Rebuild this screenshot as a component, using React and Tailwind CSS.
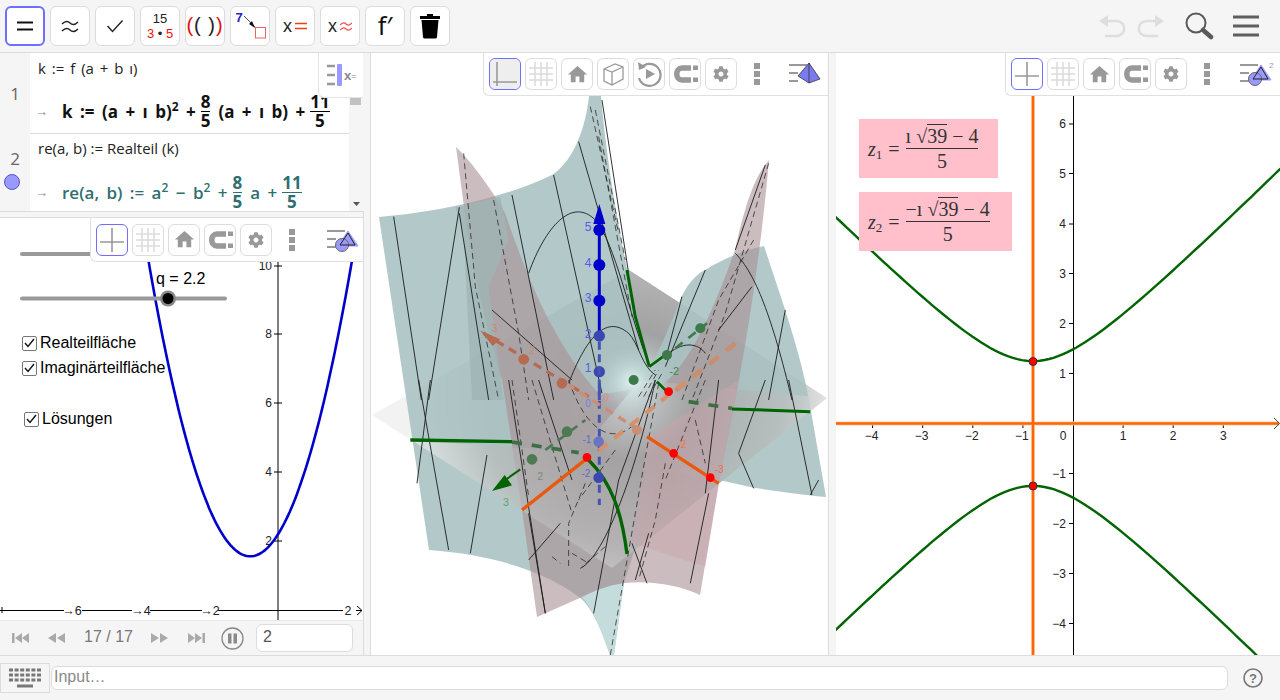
import { MdHome } from 'react-icons/md';
import { FaCog } from 'react-icons/fa';

const gray = '#999999';

function ToolBtn({ active, children }) {
  return (
    <button
      className={
        active
          ? 'w-10 h-10 shrink-0 flex items-center justify-center rounded-md bg-white border-2 border-[#6e6eff]'
          : 'w-10 h-10 shrink-0 flex items-center justify-center rounded-md bg-white border border-[#dcdcdc]'
      }
    >
      {children}
    </button>
  );
}

function Toolbar() {
  return (
    <div className="h-[53px] shrink-0 flex items-center gap-[5px] px-[5px] bg-[#f5f5f5] border-b border-[#dcdcdc]">
      <ToolBtn active>
        <svg width="18" height="12" viewBox="0 0 18 12">
          <path d="M1 2.5H17M1 9.5H17" stroke="#111" strokeWidth="1.8" />
        </svg>
      </ToolBtn>
      <ToolBtn>
        <svg width="18" height="13" viewBox="0 0 18 13" fill="none">
          <path d="M1 4C4 1 7 1 9 3S14 5 17 2M1 11C4 8 7 8 9 10S14 12 17 9" stroke="#222" strokeWidth="1.5" />
        </svg>
      </ToolBtn>
      <ToolBtn>
        <svg width="18" height="14" viewBox="0 0 18 14" fill="none">
          <path d="M1.5 7L6.5 12.5L16.5 1.5" stroke="#222" strokeWidth="1.4" />
        </svg>
      </ToolBtn>
      <ToolBtn>
        <div className="flex flex-col items-center text-[13px] leading-[15px]">
          <span className="text-[#222]">15</span>
          <span className="text-[#f01010]">3 <span className="text-[#222]">•</span> 5</span>
        </div>
      </ToolBtn>
      <ToolBtn>
        <span className="text-[20px] text-[#222] tracking-[1px] leading-none -mt-[2px]">
          <span className="text-[#e01010]">(</span>( )<span className="text-[#e01010]">)</span>
        </span>
      </ToolBtn>
      <ToolBtn>
        <svg width="32" height="32" viewBox="0 0 32 32" fill="none">
          <text x="1.5" y="12" fontSize="13" fontWeight="bold" fill="#2222cc" fontFamily="Liberation Sans">7</text>
          <path d="M10 6L21 17" stroke="#222" strokeWidth="0.8" />
          <path d="M15 14L21 18L18 11Z" fill="#111" />
          <rect x="21.5" y="17.5" width="10" height="10.5" stroke="#f06060" strokeWidth="1" />
        </svg>
      </ToolBtn>
      <ToolBtn>
        <div className="flex items-center gap-[3px]">
          <span className="text-[18px] text-[#222]">x</span>
          <svg width="12" height="8" viewBox="0 0 12 8"><path d="M0 1.5H12M0 6.5H12" stroke="#f04010" strokeWidth="1.5" /></svg>
        </div>
      </ToolBtn>
      <ToolBtn>
        <div className="flex items-center gap-[3px]">
          <span className="text-[18px] text-[#222]">x</span>
          <svg width="12" height="9" viewBox="0 0 12 9" fill="none"><path d="M0 3C3 0 5 1 6 2S9 4 12 1M0 8C3 5 5 6 6 7S9 9 12 6" stroke="#f05050" strokeWidth="1.2" /></svg>
        </div>
      </ToolBtn>
      <ToolBtn>
        <span className="text-[25px] text-[#111] font-['Noto_Sans',sans-serif] leading-none -mt-[2px]">f′</span>
      </ToolBtn>
      <ToolBtn>
        <svg width="20" height="26" viewBox="0 0 20 26">
          <path d="M7 1H13V3H20V6H0V3H7Z" fill="#000" />
          <path d="M1.5 7H18.5L17 24Q17 25.5 15 25.5H5Q3 25.5 3 24Z" fill="#000" />
        </svg>
      </ToolBtn>
      <div className="ml-auto flex items-center gap-[11px] pr-[15px]">
        <svg width="28" height="24" viewBox="0 0 28 24" fill="none" stroke="#dedede" strokeWidth="2.5">
          <path d="M3 7H18C29 7 29 22 18 22H7" />
          <path d="M1 7L10 1V13Z" fill="#dedede" stroke="none" />
        </svg>
        <svg width="28" height="24" viewBox="0 0 28 24" fill="none" stroke="#dedede" strokeWidth="2.5">
          <path d="M25 7H10C-1 7 -1 22 10 22H21" />
          <path d="M27 7L18 1V13Z" fill="#dedede" stroke="none" />
        </svg>
        <svg className="ml-[8px]" width="30" height="30" viewBox="0 0 30 30" fill="none">
          <circle cx="12" cy="12" r="9.5" stroke="#5a5a5a" strokeWidth="2" />
          <path d="M19 19L27 26" stroke="#5a5a5a" strokeWidth="4.5" strokeLinecap="round" />
        </svg>
        <svg className="ml-[7px]" width="28" height="24" viewBox="0 0 28 24">
          <path d="M1 3H27M1 12H27M1 21H27" stroke="#5f5f5f" strokeWidth="3" />
        </svg>
      </div>
    </div>
  );
}

function Frac({ top, bottom, color = 'border-black' }) {
  return (
    <span className="inline-flex flex-col items-center mx-[5px] font-bold text-[17px] leading-[18px]">
      <span>{top}</span>
      <span className={'w-full text-center border-t ' + color}>{bottom}</span>
    </span>
  );
}

function Sup({ children }) {
  return <span className="inline-block text-[12px] leading-none -translate-y-[7px]">{children}</span>;
}

function AlgebraView() {
  return (
    <div className="h-[159px] shrink-0 flex relative bg-white border-b border-[#dcdcdc] font-['Open_Sans',sans-serif]">
      <div className="w-[30px] shrink-0 bg-[#f5f5f5] flex flex-col text-[#666] text-[17px]">
        <div className="h-[81px] flex items-center justify-center pt-[1px]">1</div>
        <div className="flex-1 flex flex-col items-center pt-[14px] gap-[4px]">
          <span className="leading-[22px]">2</span>
          <span className="w-4 h-4 -ml-[6px] rounded-full bg-[#9999ff] border border-[#5555cc]" />
        </div>
      </div>
      <div className="w-[319px] shrink-0 flex flex-col">
        <div className="h-[81px] flex flex-col border-b border-[#dcdcdc]">
          <div className="text-[15px] text-[#222] pl-[8px] pt-[5px] leading-[20px] [word-spacing:2px]">k := f (a + b ı)</div>
          <div className="flex items-center h-[37px] mt-[15px] pl-[5px] font-bold text-[17px] text-[#111] whitespace-nowrap [word-spacing:3px]">
            <span className="text-[#888] font-normal w-[20px] text-[13px]">→</span>
            <span className="ml-[7px]">k := (a + ı b)<Sup>2</Sup> +</span>
            <Frac top="8" bottom="5" />
            <span className="ml-[3px]">(a + ı b) +</span>
            <Frac top="11" bottom="5" />
          </div>
        </div>
        <div className="flex-1 flex flex-col">
          <div className="text-[15px] text-[#222] pl-[8px] pt-[4px] leading-[20px]">re(a, b) := Realteil (k)</div>
          <div className="flex items-center h-[37px] mt-[16px] pl-[5px] font-semibold text-[17px] text-[#2f6f6f] whitespace-nowrap [word-spacing:3px]">
            <span className="text-[#888] font-normal w-[20px] text-[13px]">→</span>
            <span className="ml-[7px]">re(a, b) := a<Sup>2</Sup> − b<Sup>2</Sup> +</span>
            <Frac top="8" bottom="5" color="border-[#2f6f6f]" />
            <span className="ml-[3px]">a +</span>
            <Frac top="11" bottom="5" color="border-[#2f6f6f]" />
          </div>
        </div>
      </div>
      <div className="w-[15px] shrink-0 bg-[#f5f5f5] flex flex-col items-center justify-end pb-[5px]">
        <svg width="7" height="4" viewBox="0 0 7 4"><path d="M0 0H7L3.5 4Z" fill="#555" /></svg>
      </div>
      {/* scrollbar thumb and the algebra style button lie over the list */}
      <div className="absolute left-[350px] top-[42px] w-[11px] h-[10px] bg-[#c1c1c1]" />
      <div className="absolute left-[318px] top-0 w-[45px] h-[45px] bg-white border-l border-b border-[#e4e4e4] rounded-bl-md flex items-center justify-center">
        <svg width="34" height="24" viewBox="0 0 34 24">
          <path d="M3 3H11M3 12H11M3 21H11" stroke={gray} strokeWidth="2.5" />
          <rect x="13" y="1" width="5" height="22" rx="1" fill="#9999ff" />
          <text x="20" y="17" fontSize="13" fontWeight="bold" fill="#888" fontFamily="Liberation Sans">x</text>
          <text x="27" y="16" fontSize="9" fill="#888" fontFamily="Liberation Sans">=</text>
        </svg>
      </div>
    </div>
  );
}

const iconCls = 'w-8 h-8 rounded-md border border-[#dcdcdc] bg-white flex items-center justify-center shrink-0';
const activeCls = 'w-8 h-8 rounded-md border border-[#6e6eff] bg-white flex items-center justify-center shrink-0';

function AxesIcon() {
  return (
    <svg width="26" height="26" viewBox="0 0 26 26"><path d="M13 1V25M1 15H25" stroke={gray} strokeWidth="1.6" /></svg>
  );
}
function GridIcon() {
  return (
    <svg width="26" height="26" viewBox="0 0 26 26">
      <path d="M7 1V25M13 1V25M19 1V25M1 7H25M1 13H25M1 19H25" stroke="#dcdcdc" strokeWidth="1.6" />
    </svg>
  );
}
function MagnetIcon() {
  return (
    <svg width="26" height="22" viewBox="0 0 26 22" fill="none">
      <path d="M19 5H10C3 5 3 17 10 17H19" stroke={gray} strokeWidth="5.5" />
      <path d="M21 2.5H26V7H21ZM21 14.5H26V19H21Z" fill={gray} />
    </svg>
  );
}
function CubeIcon() {
  return (
    <svg width="26" height="26" viewBox="0 0 26 26" fill="none" stroke={gray} strokeWidth="1.3">
      <path d="M4 8L15 3L23 6V18L12 24L4 20ZM4 8L12 11L23 6M12 11V24" />
    </svg>
  );
}
function RotateIcon() {
  return (
    <svg width="28" height="28" viewBox="0 0 28 28" fill="none">
      <path d="M6 8A11 11 0 1 1 4 18" stroke={gray} strokeWidth="2.2" />
      <path d="M3 2L4 10L11 7Z" fill={gray} />
      <path d="M11 9L20 14L11 19Z" fill={gray} />
    </svg>
  );
}
function Kebab() {
  return (
    <div className="flex flex-col gap-[2px] shrink-0">
      <span className="w-[6px] h-[6px] bg-[#999]" />
      <span className="w-[6px] h-[6px] bg-[#999]" />
      <span className="w-[6px] h-[6px] bg-[#999]" />
    </div>
  );
}
function StyleIcon({ kind }) {
  return (
    <svg width="36" height="26" viewBox="0 0 36 26" className="shrink-0">
      <path d="M1 4H19M1 12H10M1 20H10" stroke={gray} strokeWidth="2" />
      {kind === 'cube' ? (
        <g>
          <path d="M21 2L32 18L21 22L10 15Z" fill="#7b7bf0" stroke="#333" strokeWidth="0.8" />
          <path d="M21 2V22" stroke="#333" strokeWidth="0.8" />
        </g>
      ) : (
        <g>
          <path d="M22 4L32 19H12Z" fill="#9999ff" stroke="#9999ff" />
          <circle cx="16" cy="18" r="6.5" fill="#9999ff" stroke="#666" />
          <path d="M22 6L29 18H14Z" fill="none" stroke="#222" strokeWidth="1" />
          {kind === 'two' && <text x="30" y="7" fontSize="8" fill="#999" fontFamily="Liberation Sans">2</text>}
        </g>
      )}
    </svg>
  );
}

function StyleBar({ className, icons, kebabGap, kebabRight, kind }) {
  return (
    <div className={'absolute bg-white border-l border-b border-[#e0e0e0] rounded-bl-md flex items-center gap-[4px] pl-[5px] ' + className}>
      {icons.map((ic, i) => (
        <div key={i} className={i === 0 ? activeCls : iconCls}>{ic}</div>
      ))}
      <div className={kebabGap}><Kebab /></div>
      <div className={kebabRight}><StyleIcon kind={kind} /></div>
    </div>
  );
}

const home = <MdHome size={23} color={gray} />;
const cog = <FaCog size={16} color={gray} />;

const parabola = Array.from({ length: 121 }, (_, i) => {
  const x = -3.9 + i * 0.0517;
  const y = x * x + 1.6 * x + 2.2;
  return (i ? 'L' : 'M') + (278 + x * 34.7).toFixed(1) + ' ' + (610 - y * 34.4).toFixed(1);
}).join('');

function Check({ label, className }) {
  return (
    <label className={'absolute flex items-center gap-[3px] text-[16px] text-black ' + className}>
      <span className="w-[15px] h-[15px] border border-[#777] rounded-[2px] bg-white flex items-center justify-center">
        <svg width="11" height="10" viewBox="0 0 11 10" fill="none"><path d="M1 5L4 8.5L10 1" stroke="#111" strokeWidth="1.4" /></svg>
      </span>
      {label}
    </label>
  );
}

function LeftGraphics() {
  const ticksY = [[10, 266], [8, 334], [6, 403], [4, 472], [2, 541]];
  return (
    <div className="flex-1 relative bg-white overflow-hidden">
      <svg className="block w-full h-full" viewBox="0 218 363 402" fontFamily="Liberation Sans">
        <path d="M278 262V620" stroke="#000" strokeWidth="1" />
        {ticksY.map(([v, y]) => (
          <g key={v}>
            <path d={`M274 ${y}H282`} stroke="#000" />
            <text x="272" y={y + 4} fontSize="12" textAnchor="end" fill="#222">{v}</text>
          </g>
        ))}
        <path d="M0 610.5H64M82 610.5H132M150 610.5H202M218 610.5H343M356 610.5H362M357 606L362 610.5L357 615" stroke="#000" fill="none" />
        <path d="M2 607V613" stroke="#000" />
        {[[-6, 72], [-4, 141], [-2, 210], [2, 348]].map(([v, x]) => (
          <text key={v} x={x} y="615" fontSize="12.5" textAnchor="middle" fill="#222">{v < 0 ? '→' + -v : v}</text>
        ))}
        <path d={parabola} stroke="#0000cc" strokeWidth="2.6" fill="none" />
        <path d="M22 254H100" stroke="#9a9a9a" strokeWidth="4" strokeLinecap="round" />
        <path d="M22 298.5H225" stroke="#9a9a9a" strokeWidth="4" strokeLinecap="round" />
        <circle cx="168" cy="298.5" r="8" fill="#888" />
        <circle cx="168" cy="298.5" r="5.5" fill="#000" />
        <text x="156" y="284" fontSize="16" fill="#000">q = 2.2</text>
      </svg>
      <Check label="Realteilfläche" className="left-[22px] top-[113px]" />
      <Check label="Imaginärteilfläche" className="left-[22px] top-[138px]" />
      <Check label="Lösungen" className="left-[24px] top-[189px]" />
      <StyleBar
        className="right-0 top-0 w-[273px] h-[44px]"
        icons={[<AxesIcon />, <GridIcon />, home, <MagnetIcon />, cog]}
        kebabGap="ml-[13px]"
        kebabRight="ml-[27px]"
        kind="plain"
      />
    </div>
  );
}

function Player() {
  return (
    <div className="h-[35px] shrink-0 bg-[#f5f5f5] border-t border-[#e8e8e8] flex items-center text-[#777] pl-[12px]">
      <svg width="17" height="10" viewBox="0 0 17 10" fill="#aaa"><path d="M0 0H2.5V10H0ZM3 5L10 0V10ZM10 5L17 0V10Z" /></svg>
      <svg className="ml-[19px]" width="17" height="10" viewBox="0 0 17 10" fill="#aaa"><path d="M0 5L8 0V10ZM9 5L17 0V10Z" /></svg>
      <span className="ml-[19px] text-[16px] w-[49px] whitespace-nowrap -mt-[2px]">17 / 17</span>
      <svg className="ml-[18px]" width="17" height="10" viewBox="0 0 17 10" fill="#aaa"><path d="M0 0L8 5L0 10ZM9 0L17 5L9 10Z" /></svg>
      <svg className="ml-[20px]" width="17" height="10" viewBox="0 0 17 10" fill="#aaa"><path d="M0 0L7 5L0 10ZM7 0L14 5L7 10ZM14.5 0H17V10H14.5Z" /></svg>
      <svg className="ml-[16px]" width="23" height="23" viewBox="0 0 23 23">
        <circle cx="11.5" cy="11.5" r="10.5" fill="#f5f5f5" stroke="#888" strokeWidth="1.3" />
        <path d="M7 6.5H10.5V16.5H7ZM12.5 6.5H16V16.5H12.5Z" fill="#8a8a8a" />
      </svg>
      <div className="ml-[12px] w-[97px] h-[28px] bg-white border border-[#dcdcdc] rounded-md text-[16px] text-[#555] pl-[6px] leading-[24px]">2</div>
    </div>
  );
}

function LeftColumn() {
  return (
    <div className="w-[364px] shrink-0 flex flex-col border-r border-[#dcdcdc]">
      <AlgebraView />
      <div className="h-[6px] shrink-0 bg-[#f5f5f5] border-b border-[#dcdcdc]" />
      <LeftGraphics />
      <Player />
    </div>
  );
}

// zoom coordinates are 3x the panel, so the mesh groups scale them back
const meshSolid6 = [
  'M65,350L148,900', 'M262,322L170,900', 'M262,340L350,900', 'M420,285L545,900', 'M545,225L690,880',
  'M620,125L800,750', 'M690,0L770,520', 'M470,520C520,380 600,290 670,360C730,430 770,640 830,790',
  'M590,850C640,720 700,640 770,700C800,730 810,800 850,825', 'M360,630L600,840', 'M1000,510L880,800',
  'M930,590L880,780', 'M1090,460C1150,520 1200,650 1260,900', 'M1240,630L1190,900', 'M1140,560L1040,690',
  'M880,770C930,720 980,730 1000,760', 'M1180,195L1090,450',
];
const meshDash6 = [
  'M275,160L310,560L380,900', 'M365,300L440,700L470,900', 'M1190,190L1060,640L960,900',
  'M1145,420L1040,600L930,900', 'M655,20L740,400', 'M670,30L760,480', 'M680,110L780,650',
  'M800,890L850,810', 'M815,890L860,810', 'M830,890L870,820',
];
const meshSolid7 = [
  'M140,0L230,510', 'M175,0L135,310', 'M345,225L295,520', 'M410,0L520,700', 'M470,540L565,430',
  'M625,565C700,530 800,250 850,0', 'M780,490L825,610', 'M830,460L790,600', 'M1010,340L955,610',
  'M1180,0L1100,220L1145,325', 'M1250,0L1320,345', 'M1040,0L1000,340', 'M1340,300L1315,345',
  'M665,700L740,300L850,0', 'M500,0L600,300', 'M470,400L520,700',
];
const meshDash7 = [
  'M715,825L790,400L860,10', 'M480,0L600,400', 'M880,250L850,420L800,600', 'M600,520L650,550',
  'M540,530L565,550', 'M640,310L590,430L590,570', 'M700,500L630,560', 'M590,0C640,150 720,200 790,130',
  'M970,120L1000,250', 'M1000,0L880,300', 'M730,210L620,360', 'M420,0L470,350',
];

function Scene3D() {
  return (
    <svg className="block w-full h-full" viewBox="371 53 457 602" fontFamily="Liberation Sans">
      <defs>
        <radialGradient id="floor" gradientUnits="userSpaceOnUse" cx="630" cy="395" r="215">
          <stop offset="0" stopColor="#dceaea" />
          <stop offset="0.3" stopColor="#a2a2a2" />
          <stop offset="0.7" stopColor="#bcbcbc" />
          <stop offset="1" stopColor="#f2f2f2" />
        </radialGradient>
        <radialGradient id="glow" gradientUnits="userSpaceOnUse" cx="632" cy="382" r="36">
          <stop offset="0" stopColor="#e2f4f2" stopOpacity="0.95" />
          <stop offset="1" stopColor="#b4cfcf" stopOpacity="0" />
        </radialGradient>
      </defs>
      <path d="M372,415L629,270L827,398L612,568Z" fill="url(#floor)" />
      <path
        d="M379,217C430,213 500,200 552,175C575,160 586,125 589,96L601,96C607,170 625,270 649,367C658,355 668,330 679,303C686,285 695,275 705,270C725,258 745,250 764,246C780,295 800,350 809,400L826,497C800,495 770,490 755,488L719,480L660,470L624,583C620,610 616,640 614,655L610,655C600,625 590,605 579,597C550,575 500,555 429,550Z"
        fill="#abc2c2"
        fillOpacity="0.9"
      />
      <path d="M582,597C595,590 610,585 624,583L614,655L610,655C600,625 590,605 582,597Z" fill="#c4dcdc" />
      <path
        d="M456,147C472,162 492,190 505,213C525,270 550,340 600,395L665,383C690,360 710,320 735,250C745,205 755,175 769,160C762,240 750,320 739,380L719,483L700,595C680,585 650,580 624,583C610,585 595,590 582,597L537,617L522,510L502,380C490,340 470,260 464,207Z"
        fill="#a98f94"
        fillOpacity="0.6"
      />
      <g transform="translate(372 100) scale(0.3333)">
        <path d="M250,322L385,290L410,420L350,560L395,900L300,900L275,400Z" fill="#9fb4b4" fillOpacity="0.75" />
      </g>
      <path d="M372,415L410,440L580,452L640,380L827,398L612,568Z" fill="url(#floor)" fillOpacity="0.6" />
      <g transform="translate(372 380) scale(0.3333)">
        <path d="M830,170L1100,0L1040,310L1000,560L780,490Z" fill="#c9a5aa" fillOpacity="0.45" />
      </g>
      <ellipse cx="632" cy="382" rx="36" ry="34" fill="url(#glow)" />

      <g transform="translate(372 100) scale(0.3333)" fill="none" stroke="#1c1c1c" strokeWidth="0.9">
        {meshSolid6.map((d) => <path key={d} d={d} vectorEffect="non-scaling-stroke" />)}
        {meshDash6.map((d) => <path key={d} d={d} strokeDasharray="6 4" strokeOpacity="0.8" vectorEffect="non-scaling-stroke" />)}
      </g>
      <g transform="translate(372 380) scale(0.3333)" fill="none" stroke="#1c1c1c" strokeWidth="0.9">
        {meshSolid7.map((d) => <path key={d} d={d} vectorEffect="non-scaling-stroke" />)}
        {meshDash7.map((d) => <path key={d} d={d} strokeDasharray="6 4" strokeOpacity="0.8" vectorEffect="non-scaling-stroke" />)}
      </g>

      {/* axes in zoom coordinates */}
      <g transform="translate(372 100) scale(0.3333)" fill="none">
        <path d="M682,700V340" stroke="#0000cc" strokeWidth="9" />
        <path d="M682,312L664,372H700Z" fill="#0000cc" />
        {[390, 495, 602].map((y) => <circle key={y} cx="682" cy={y} r="18" fill="#0000cc" />)}
        {[708, 815].map((y) => <circle key={y} cx="682" cy={y} r="17" fill="#3a47b0" />)}
        <path d="M682,725V900" stroke="#4652b4" strokeWidth="9" strokeDasharray="24 14" />
        {[['5', 380], ['4', 487], ['3', 592], ['2', 700], ['1', 803]].map(([t, y]) => (
          <text key={t} x="648" y={y + 14} fontSize="36" textAnchor="middle" fill="#5a5aee" stroke="none">{t}</text>
        ))}
        <path d="M765,510L790,650L832,800" stroke="#006400" strokeWidth="9" />
        <path d="M832,800L880,765" stroke="#006400" strokeWidth="8" />
        <path d="M855,845L885,875" stroke="#006400" strokeWidth="8" />
        <path d="M910,745L1005,670" stroke="#3d7a4a" strokeWidth="8" strokeDasharray="28 22" />
        {[[985, 685], [885, 765], [785, 840]].map(([x, y]) => <circle key={x} cx={x} cy={y} r="15" fill="#3d7a4a" />)}
        <text x="907" y="825" fontSize="32" textAnchor="middle" fill="#3a8a4a" stroke="none">-2</text>
        <path d="M1090,730L900,880" stroke="#c88f6f" strokeWidth="14" strokeDasharray="36 28" />
        <path d="M335,700L650,890" stroke="#b66a52" strokeWidth="10" strokeDasharray="26 18" />
        <path d="M325,692L385,718L362,738Z" fill="#b66a52" />
        {[[455, 778], [570, 850]].map(([x, y]) => <circle key={x} cx={x} cy={y} r="16" fill="#b66a52" />)}
        <text x="368" y="695" fontSize="30" textAnchor="middle" fill="#c98a72" stroke="none">3</text>
        <text x="480" y="762" fontSize="30" textAnchor="middle" fill="#c98a72" stroke="none">2</text>
      </g>
      <g transform="translate(372 380) scale(0.3333)" fill="none">
        <path d="M115,180L420,185" stroke="#006400" strokeWidth="10" />
        <path d="M420,186L620,218" stroke="#3d6e45" strokeWidth="11" strokeDasharray="30 30" />
        <path d="M950,65L1080,85" stroke="#3d6e45" strokeWidth="11" strokeDasharray="30 30" />
        <path d="M1080,87L1315,95" stroke="#006400" strokeWidth="9" />
        <path d="M650,240C720,310 750,400 765,522" stroke="#006400" strokeWidth="10" />
        <path d="M400,300L445,268" stroke="#006400" strokeWidth="6" />
        <path d="M520,210L640,120" stroke="#4d7a52" strokeWidth="8" strokeDasharray="28 18" />
        <path d="M360,333L398,285L420,316Z" fill="#006400" />
        {[[480, 238], [585, 155]].map(([x, y]) => <circle key={x} cx={x} cy={y} r="16" fill="#4d7a52" />)}
        <text x="402" y="378" fontSize="32" textAnchor="middle" fill="#5ea56a" stroke="none">3</text>
        <text x="505" y="300" fontSize="32" textAnchor="middle" fill="#7a8a7a" stroke="none">2</text>
        <path d="M682,20V375" stroke="#4652b4" strokeWidth="9" strokeDasharray="24 18" />
        <circle cx="680" cy="185" r="16" fill="#6a74c0" />
        <circle cx="680" cy="293" r="16" fill="#3a47b0" />
        <text x="648" y="82" fontSize="30" textAnchor="middle" fill="#7a7ae0" stroke="none">0</text>
        <text x="703" y="64" fontSize="30" textAnchor="middle" fill="#e08a80" stroke="none">0</text>
        <text x="642" y="290" fontSize="30" textAnchor="middle" fill="#5a6ad0" stroke="none">-2</text>
        <text x="645" y="188" fontSize="30" textAnchor="middle" fill="#5a6ad0" stroke="none">-1</text>
        <path d="M450,390L645,235" stroke="#e8590c" strokeWidth="10" />
        <path d="M680,212L940,5" stroke="#d6906a" strokeWidth="12" strokeDasharray="34 26" />
        <path d="M1040,310L825,170" stroke="#e8590c" strokeWidth="10" />
        <path d="M800,150L590,15" stroke="#c88f75" strokeWidth="10" strokeDasharray="26 20" />
        <circle cx="795" cy="150" r="15" fill="#c88f75" />
        {[[645, 232], [905, 220], [1015, 293], [890, 35]].map(([x, y]) => <circle key={x} cx={x} cy={y} r="13" fill="#ff0000" />)}
        <text x="930" y="205" fontSize="30" textAnchor="middle" fill="#f07a3a" stroke="none">-2</text>
        <text x="1042" y="278" fontSize="30" textAnchor="middle" fill="#f06a5a" stroke="none">-3</text>
      </g>
    </svg>
  );
}

function CenterPanel() {
  return (
    <div className="w-[458px] shrink-0 relative bg-white overflow-hidden border-r border-[#dcdcdc]">
      <Scene3D />
      <StyleBar
        className="right-0 top-0 w-[345px] h-[43px]"
        icons={[
          <div className="w-full h-full rounded-md bg-[#eeeeee] flex items-center justify-center"><svg width="26" height="26" viewBox="0 0 26 26"><path d="M5 1V25M1 21H25" stroke={gray} strokeWidth="1.6" /></svg></div>,
          <GridIcon />, home, <CubeIcon />, <RotateIcon />, <MagnetIcon />, cog,
        ]}
        kebabGap="ml-[13px]"
        kebabRight="ml-[24px]"
        kind="cube"
      />
    </div>
  );
}

const hyper = (sign) =>
  Array.from({ length: 101 }, (_, i) => {
    const x = -4.8 + i * 0.09;
    const y = sign * Math.sqrt((x + 0.8) * (x + 0.8) + 1.56);
    return (i ? 'L' : 'M') + (1073 + x * 50.1).toFixed(1) + ' ' + (423.5 - y * 50).toFixed(1);
  }).join('');

function MathLabel({ sub, minus, className }) {
  return (
    <div className={"absolute bg-[#ffc0cb] h-[59px] flex items-center pl-[9px] font-['Liberation_Serif',serif] text-[20px] text-[#333] whitespace-nowrap " + className}>
      <span className="italic">z</span>
      <span className="text-[13px] translate-y-[6px]">{sub}</span>
      <span className="mx-[6px]">=</span>
      <span className="inline-flex flex-col items-center leading-[24px]">
        <span>
          {minus && '−'}ı √<span className="border-t border-[#333]">39</span> − 4
        </span>
        <span className="w-full text-center border-t border-[#333]">5</span>
      </span>
    </div>
  );
}

function RightPanel() {
  const ys = [[6, 124], [5, 173.5], [4, 224], [3, 273.5], [2, 323.5], [1, 373.5], [-1, 473.5], [-2, 523.5], [-3, 573.5], [-4, 623.5]];
  const xs = [-4, -3, -2, -1, 1, 2, 3];
  return (
    <div className="flex-1 relative bg-white overflow-hidden">
      <svg className="block w-full h-full" viewBox="836 53 444 602" fontFamily="Liberation Sans">
        <path d="M1073.5 96V655" stroke="#000" />
        {ys.map(([v, y]) => (
          <g key={v}>
            <path d={`M1069 ${y}H1073`} stroke="#000" />
            <text x="1066" y={y + 4} fontSize="12" textAnchor="end" fill="#222">{v < 0 ? '−' + -v : v}</text>
          </g>
        ))}
        {xs.map((v) => (
          <g key={v}>
            <path d={`M${1073 + v * 50.1} 423V428`} stroke="#000" />
            <text x={1073 + v * 50.1 - (v < 0 ? 1 : 0)} y="440" fontSize="12" textAnchor="middle" fill="#222">{v < 0 ? '−' + -v : v}</text>
          </g>
        ))}
        <text x="1063" y="440" fontSize="12" textAnchor="middle" fill="#222">0</text>
        <path d={hyper(1)} stroke="#006400" strokeWidth="2.4" fill="none" />
        <path d={hyper(-1)} stroke="#006400" strokeWidth="2.4" fill="none" />
        <path d="M1033 53V655M836 423.5H1279" stroke="#ffd0b0" strokeWidth="4" />
        <path d="M1033 53V655M836 423.5H1279" stroke="#ff6600" strokeWidth="2.4" />
        <path d="M1274 418L1279.5 423.5L1274 429" stroke="#444" fill="none" />
        <circle cx="1033" cy="361.5" r="4" fill="#ff0000" stroke="#333" />
        <circle cx="1033" cy="486" r="4" fill="#ff0000" stroke="#333" />
      </svg>
      <MathLabel sub="1" className="left-[23px] top-[66px] w-[139px]" />
      <MathLabel sub="2" minus className="left-[23px] top-[139px] w-[153px]" />
      <StyleBar
        className="right-0 top-0 w-[275px] h-[43px]"
        icons={[<AxesIcon />, <GridIcon />, home, <MagnetIcon />, cog]}
        kebabGap="ml-[13px]"
        kebabRight="ml-[25px]"
        kind="two"
      />
    </div>
  );
}

function InputBar() {
  return (
    <div className="h-[45px] shrink-0 bg-[#f5f5f5] border-t border-[#dcdcdc] flex items-center">
      <div className="w-[50px] h-[30px] -mt-[1px] shrink-0 border border-[#dcdcdc] flex items-center justify-center">
        <svg width="34" height="20" viewBox="0 0 34 20">
          <path d="M1 2H33M1 7H33M1 12H33" stroke="#777" strokeWidth="3" strokeDasharray="4 1.6" />
          <path d="M9 18H25" stroke="#777" strokeWidth="3" />
        </svg>
      </div>
      <div className="ml-[1px] w-[1177px] h-[24px] bg-white border border-[#dcdcdc] rounded-md text-[16px] text-[#8a8a8a] pl-[2px] leading-[20px]">Input…</div>
      <svg className="ml-[15px]" width="20" height="20" viewBox="0 0 20 20">
        <circle cx="10" cy="10" r="9" fill="none" stroke="#777" strokeWidth="1.6" />
        <text x="10" y="14.5" fontSize="13" fontWeight="bold" textAnchor="middle" fill="#777" fontFamily="Liberation Sans">?</text>
      </svg>
    </div>
  );
}

export default function App() {
  return (
    <div className="w-[1280px] h-[700px] flex flex-col overflow-hidden bg-white font-['Liberation_Sans',sans-serif]">
      <Toolbar />
      <div className="flex-1 min-h-0 flex">
        <LeftColumn />
        <div className="w-[7px] shrink-0 bg-[#f5f5f5] border-r border-[#dcdcdc]" />
        <CenterPanel />
        <div className="w-[7px] shrink-0 bg-[#f5f5f5]" />
        <RightPanel />
      </div>
      <InputBar />
    </div>
  );
}
